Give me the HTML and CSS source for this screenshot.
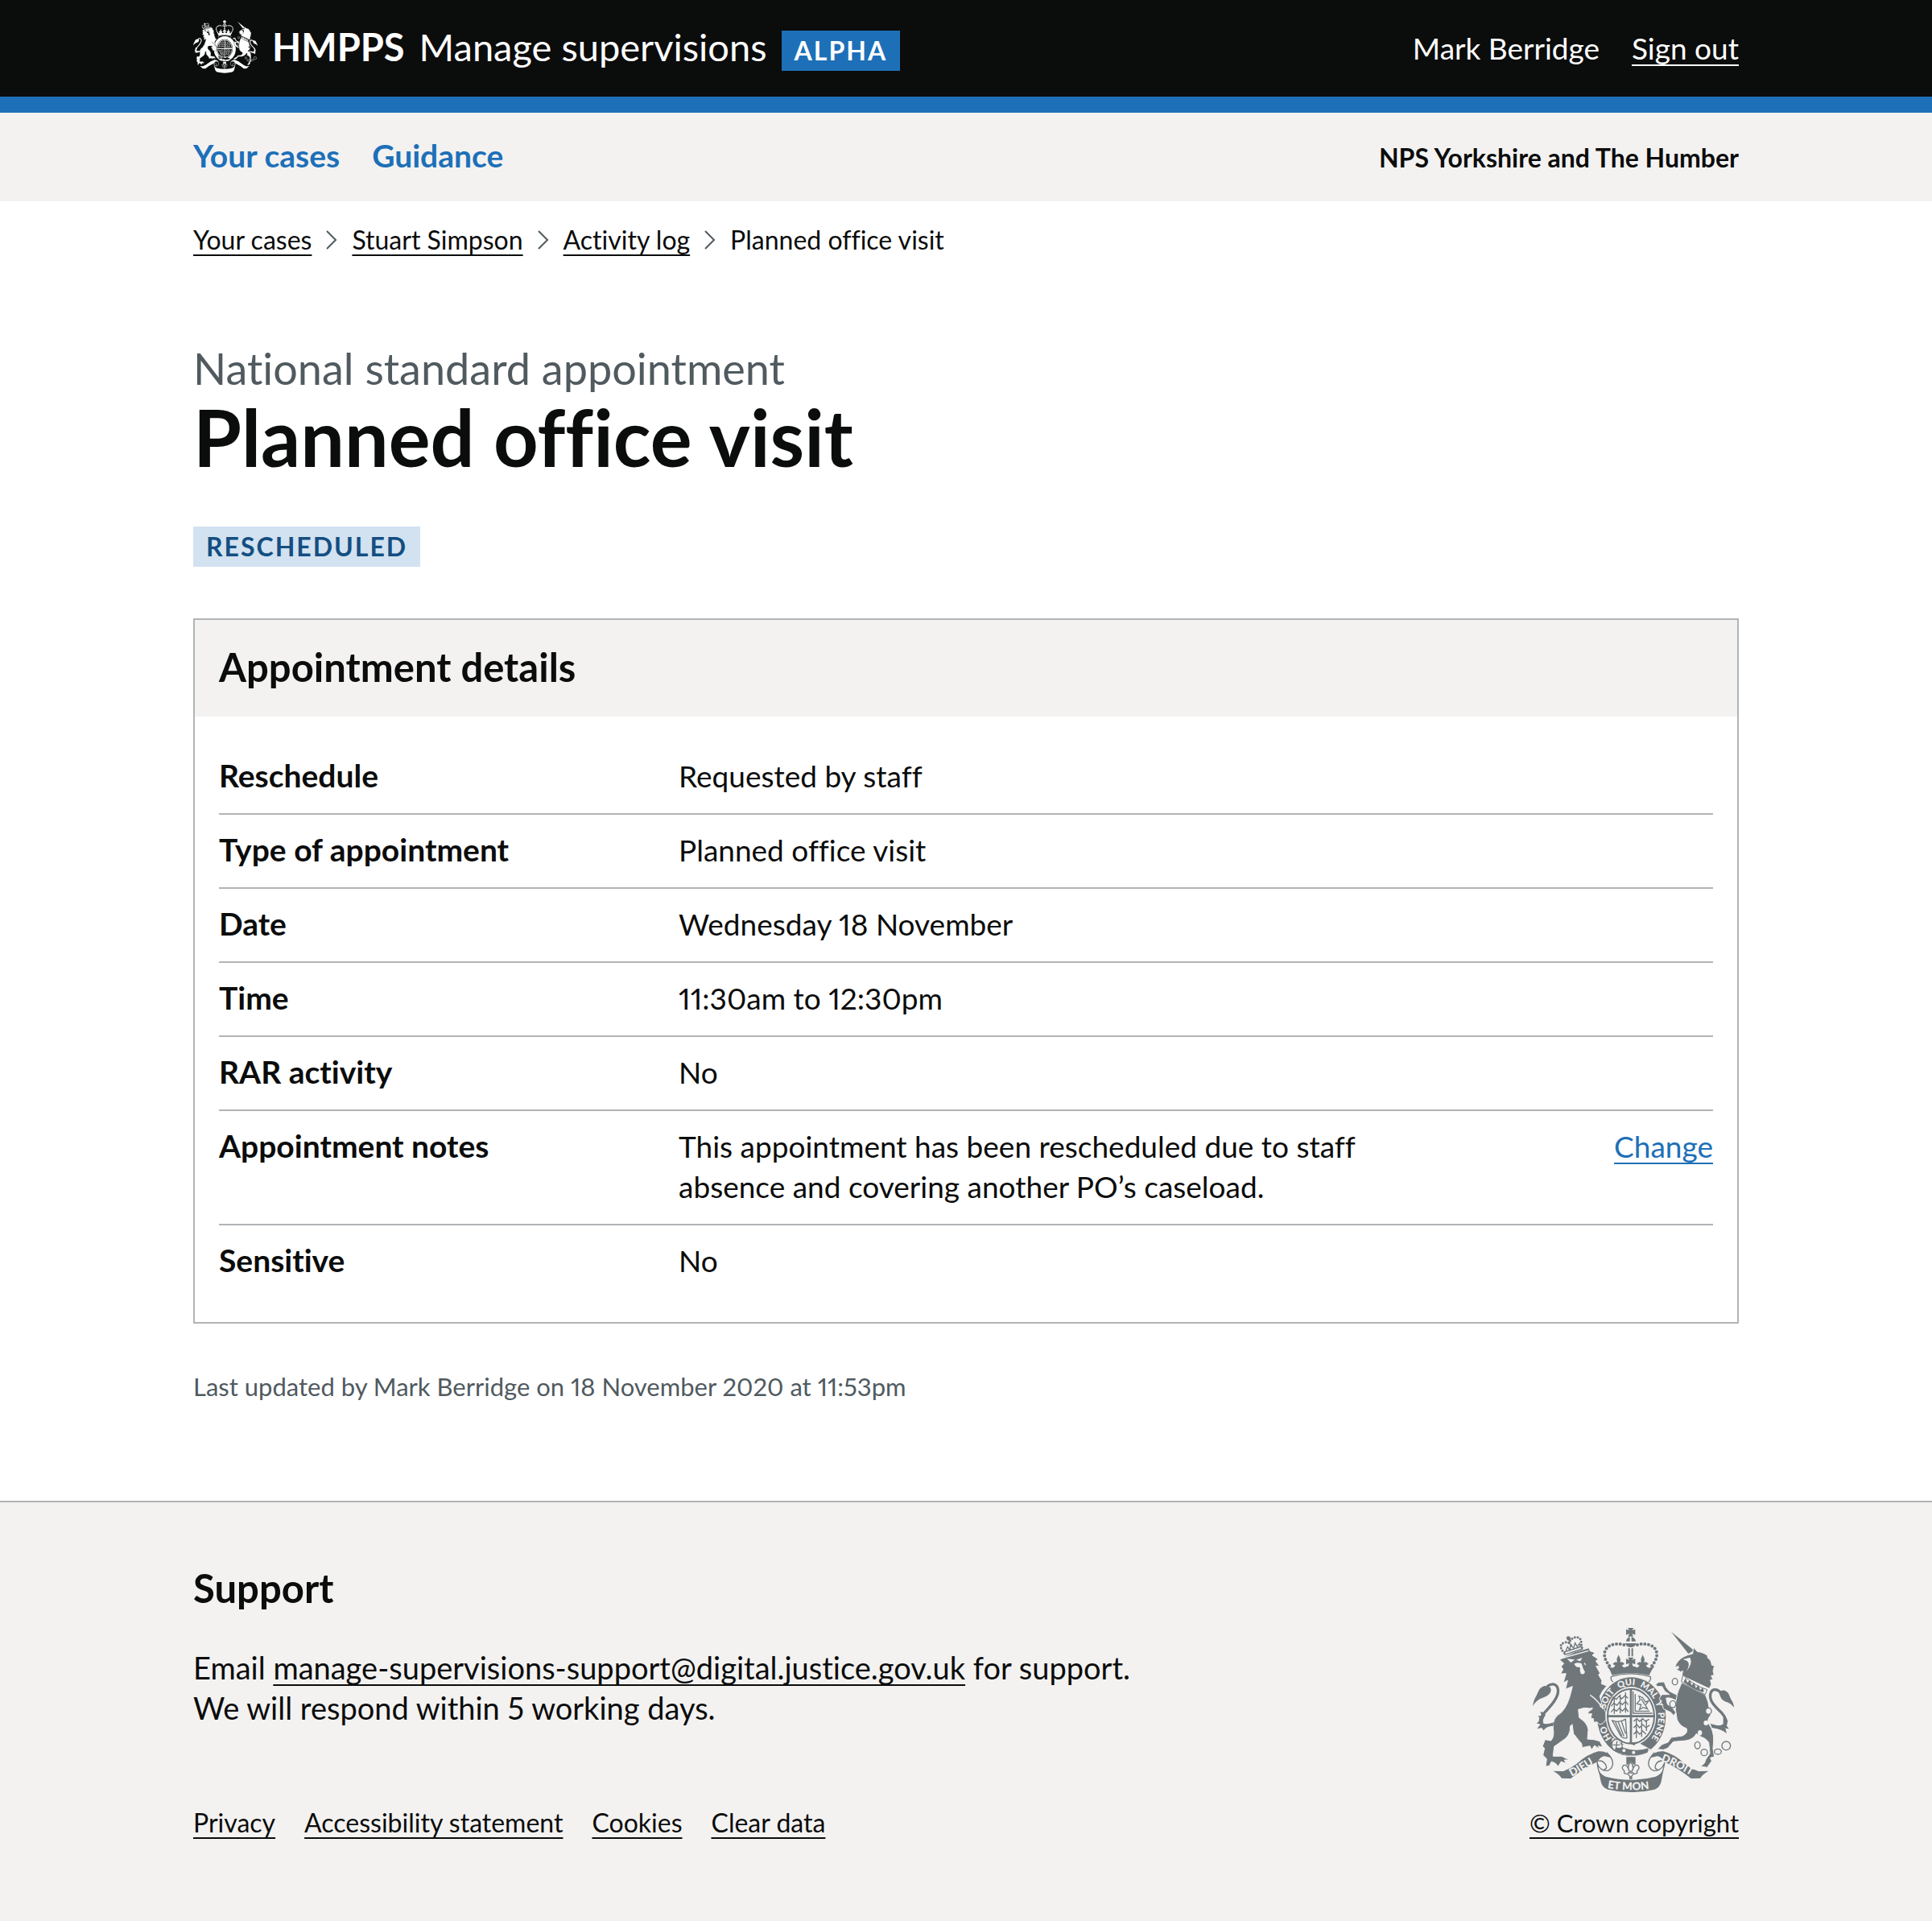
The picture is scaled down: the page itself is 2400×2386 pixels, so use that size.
FILE: index.html
```html
<!DOCTYPE html>
<html lang="en">
<head>
<meta charset="utf-8">
<meta name="viewport" content="width=device-width, initial-scale=1">
<title>Planned office visit - Manage supervisions</title>
<link rel="stylesheet" href="styles.css">
</head>
<body>
<svg class="sprite" aria-hidden="true">
  <symbol id="crest" viewBox="42 36 750 612">
    <!-- crown -->
    <path d="M402 45L396 36H418L412 45L424 41V62L412 57L417 68H397L402 57L390 62V41ZM390 86Q392 72 404 70V86ZM410 70Q424 72 426 86H410ZM387 93H428Q424 108 407 108Q391 108 387 93ZM398 112H404V142H398ZM410 112H416V142H410Z"/>
    <g class="bead-line"><path d="M382 99C350 90 318 100 311 124C304 150 322 168 334 186"/><path d="M432 99C464 90 496 100 503 124C510 150 492 168 480 186"/></g>
    <path d="M318 177Q330 186 343 184L350 176L340 170Q350 158 357 165L355 152L362 136L369 152L368 165Q376 158 384 170L374 176L382 184L399 178L402 167L390 172V150L402 156L397 146H418L412 156L424 150V172L412 167L415 178L432 184L440 176L430 170Q438 158 446 165L445 152L452 136L459 152L457 165Q464 158 474 170L464 176L471 184Q484 186 497 177Q484 192 476 212Q407 196 338 212Q332 192 318 177Z"/>
    <path class="line" d="M335 217Q407 196 480 217Q485 228 474 238M335 217Q330 228 341 238"/>
    <!-- garter and shield -->
    <ellipse cx="410" cy="367" rx="128" ry="147"/>
    <ellipse class="cut" cx="408" cy="365" rx="94" ry="110"/>
    <ellipse cx="408" cy="365" rx="90" ry="105"/>
    <ellipse class="cut" cx="408" cy="365" rx="84" ry="99"/>
    <path d="M320 361H496V369H320ZM404 262H412V468H404Z"/>
    <path class="line" d="M416 272V354H488M424 282V346H478M335 308L342 294L354 302L364 290L374 300L386 288L397 298M334 328L344 316L356 324L366 312L376 322L388 310L398 322M334 350L344 338L354 346L366 334L376 346L388 334L398 348M346 296V356M368 284V354M388 276V352"/>
    <path class="line" d="M430 318L442 304L438 290L452 296L462 312L474 308L462 324L470 338L454 332L440 340L446 322ZM446 300L460 322"/>
    <path class="line" d="M337 380Q360 392 388 376L393 446Q375 450 366 432Q350 400 337 380M350 386L374 438M361 387L382 440M373 384L388 430"/>
    <path class="line" d="M418 384L430 374L440 384L452 374L462 384L476 376M418 408L430 396L440 408L452 396L464 408L478 398M418 432L430 420L440 432L452 420L464 432M428 374V446M448 374V442M466 378V420"/>
    <path class="cut" d="M338 446Q352 448 372 470Q400 474 440 466L482 488Q450 514 410 514Q360 510 335 478Z"/>
    <path d="M374 480Q425 500 474 484L470 500Q410 526 346 494L352 480Q362 486 374 480ZM396 462H432L420 474Z"/>
    <circle class="cut" cx="382" cy="493" r="6"/><circle class="cut" cx="418" cy="500" r="6"/>
    <path class="line" d="M342 456Q332 470 340 486Q345 498 360 490M342 456Q354 444 372 456L376 482M356 458L352 488M340 472H368"/>
    <!-- lion -->
    <path class="halo" d="M142 155L165 140L200 125L252 110L256 122L274 128L264 138L286 152L277 159L291 178L278 178L293 205L287 210L300 232L298 244L318 252L303 270L292 290L303 330L314 350L315 378L303 392L292 396L281 386L270 388L268 374L258 372L262 356L246 356Q250 344 262 340Q270 330 256 336Q236 330 212 340L215 370Q246 390 249 415L246 450L270 452L292 458L303 480L286 476L291 487L272 474L262 490L255 476L225 482Q228 466 216 458L194 430L189 395L182 402Q184 440 150 458L122 478L118 514L150 514L179 528L160 528L166 541L148 534L137 552L126 540L112 534L104 550L90 552L94 524L80 510L86 484L78 478L88 452L110 456Q124 440 118 410Q114 370 148 352Q174 325 186 270L190 254L164 264L172 232L156 240L166 206L146 207L155 190L148 180L158 168Z"/>
    <path class="cut" d="M170 151L199 154L184 165ZM204 155L226 147L220 160ZM196 170Q210 162 224 169L231 190L237 200Q232 213 221 206Q216 196 219 184L204 181ZM236 164L241 176L233 170Z"/>
    <path class="cut-line" d="M256 286Q285 305 304 338M146 150L250 121"/>
    <path class="tail" d="M112 396C66 408 60 384 82 356C110 326 142 292 136 264C132 244 114 240 96 254"/>
    <path d="M42 328C46 300 55 292 63 272C72 252 92 246 108 258C114 272 106 284 90 292C70 300 56 304 42 328ZM84 352L70 348L76 364L62 364L72 378L56 392L72 394L58 412L76 408L82 418Q96 400 118 402L120 388Q96 398 82 392Q76 380 90 360Z"/>
    <path class="line" d="M160 136L228 114M158 126L224 105M166 120L172 106L180 118L184 98L194 112L200 92L208 106L216 94L219 104"/>
    <g class="small-bead"><path d="M160 130C140 108 145 94 158 92Q170 86 178 92C184 70 208 66 218 76C226 86 221 100 226 110"/><path d="M178 92Q186 100 188 110"/></g>
    <path d="M173 66L182 70L184 80L177 84L170 80L167 72Z"/>
    <!-- unicorn -->
    <path d="M558 50L643 120L622 132Z"/>
    <path class="halo" d="M572 180Q577 168 584 160Q600 140 638 132L641 108L655 124Q682 128 694 140L693 146Q708 156 709 174L719 178L714 196L718 212L707 214L714 228L704 230L708 246L700 262L598 214L601 196Q592 204 588 196L576 192L588 184ZM597 240L686 286Q698 310 701 345L705 362Q688 378 700 396Q717 420 716 456L714 486L719 516L704 520L709 532L692 556L668 552L682 540L688 524L702 504L698 462Q686 446 666 440L652 430Q640 452 612 456L566 460L545 484L530 490L506 488L524 470L546 462L558 444L600 438Q622 428 615 410Q592 404 580 378L574 340L576 296Q584 270 597 240Z"/>
    <path class="halo" d="M500 246L512 238L532 237L540 258L552 272L580 286L576 306Q548 292 539 298L544 320Q566 334 575 350L568 363L556 350L530 338L514 298L524 284L552 284L534 272L524 254L506 254Z"/>
    <path class="cut" d="M602 153L628 146Q640 168 614 198Q632 168 616 158ZM574 180L588 176L584 182Z"/>
    <path class="band" d="M602 211Q640 250 692 266L685 284Q630 264 596 236Z"/>
    <path d="M604 238L612 222L618 240L628 230L634 250L644 240L650 260L660 248L666 268L676 258L680 272L676 276Q634 264 604 238Z"/>
    <g class="ring"><ellipse cx="572" cy="236" rx="10" ry="12"/><ellipse cx="564" cy="320" rx="11" ry="13"/><ellipse cx="697" cy="346" rx="11" ry="12"/><ellipse cx="656" cy="473" rx="10" ry="13"/><circle cx="681" cy="500" r="12"/><ellipse cx="732" cy="497" rx="13" ry="10"/><circle cx="763" cy="475" r="16"/></g>
    <circle class="cut" cx="553" cy="262" r="8"/><circle class="cut" cx="688" cy="390" r="9"/><ellipse class="cut" cx="665" cy="427" rx="8" ry="10"/>
    <path class="tail" d="M712 400C768 420 776 386 744 350C716 324 696 302 706 276C712 262 730 262 744 278"/>
    <path d="M736 278C746 262 768 268 775 288C780 304 792 314 792 332C778 314 768 314 756 308C742 300 742 290 736 278ZM752 360L762 366L758 376L770 382L760 394L773 412L760 410L765 430Q746 412 710 408L704 392Q736 406 752 394Z"/>
    <!-- ribbon -->
    <path d="M118 569L156 570Q182 560 206 542Q246 506 286 496Q320 492 336 520L310 514Q296 514 284 534Q230 560 184 597L150 596Q140 580 118 569ZM697 569L659 570Q633 560 609 542Q569 506 530 496Q496 492 480 520L506 514Q520 514 532 534Q586 560 632 597L666 596Q676 580 697 569Z"/>
    <path class="line" d="M318 500Q348 530 338 552Q328 574 304 566Q284 556 282 534M304 566Q326 560 310 540Q300 528 286 532M282 534Q284 572 300 592M496 500Q466 530 476 552Q486 574 510 566Q530 556 534 534M510 566Q490 560 504 540Q514 528 530 532M534 534Q530 572 514 592"/>
    <path d="M286 560Q292 580 314 590Q407 614 500 590Q522 580 530 560L521 608Q516 630 496 638Q407 658 322 638Q300 630 296 608Z"/>
    <path d="M391 517H425V545H418L407 531L397 545H391Z"/>
    <path class="line" d="M407 534Q392 554 402 570H412Q422 554 407 534ZM402 570Q394 542 380 548Q370 558 384 570Q378 580 396 580L407 592L418 580Q436 580 430 570Q444 558 434 548Q420 542 412 570M396 576H419M404 592H411V598H404Z"/>
  </symbol>
</svg>

<header class="header">
  <div class="container header-inner">
    <div class="brand">
      <svg class="brand-crest" aria-hidden="true"><use href="#crest"/></svg>
      <a class="brand-org" href="#">HMPPS</a>
      <a class="brand-service" href="#">Manage supervisions</a>
      <strong class="tag tag-alpha">Alpha</strong>
    </div>
    <div class="account">
      <span>Mark Berridge</span>
      <a href="#">Sign out</a>
    </div>
  </div>
</header>

<div class="primary-nav">
  <div class="container primary-nav-inner">
    <nav class="nav-links" aria-label="Primary">
      <a href="#">Your cases</a>
      <a href="#">Guidance</a>
    </nav>
    <p class="region">NPS Yorkshire and The Humber</p>
  </div>
</div>

<div class="container">
  <nav aria-label="Breadcrumb">
    <ol class="breadcrumbs">
      <li><a href="#">Your cases</a></li>
      <li><svg class="chevron" viewBox="0 0 14 24" aria-hidden="true"><path d="M1 1L12 12L1 23"/></svg><a href="#">Stuart Simpson</a></li>
      <li><svg class="chevron" viewBox="0 0 14 24" aria-hidden="true"><path d="M1 1L12 12L1 23"/></svg><a href="#">Activity log</a></li>
      <li><svg class="chevron" viewBox="0 0 14 24" aria-hidden="true"><path d="M1 1L12 12L1 23"/></svg><span aria-current="page">Planned office visit</span></li>
    </ol>
  </nav>

  <main>
    <p class="caption">National standard appointment</p>
    <h1 class="title">Planned office visit</h1>
    <strong class="tag tag-status">Rescheduled</strong>

    <section class="card">
      <h2 class="card-title">Appointment details</h2>
      <dl class="summary">
        <div class="row"><dt>Reschedule</dt><dd>Requested by staff</dd></div>
        <div class="row"><dt>Type of appointment</dt><dd>Planned office visit</dd></div>
        <div class="row"><dt>Date</dt><dd>Wednesday 18 November</dd></div>
        <div class="row"><dt>Time</dt><dd>11:30am to 12:30pm</dd></div>
        <div class="row"><dt>RAR activity</dt><dd>No</dd></div>
        <div class="row"><dt>Appointment notes</dt><dd>This appointment has been rescheduled due to staff absence and covering another PO’s caseload.</dd><dd class="action"><a href="#">Change</a></dd></div>
        <div class="row"><dt>Sensitive</dt><dd>No</dd></div>
      </dl>
    </section>

    <p class="updated">Last updated by Mark Berridge on 18 November 2020 at 11:53pm</p>
  </main>
</div>

<footer class="footer">
  <div class="container footer-inner">
    <div>
      <h2 class="footer-title">Support</h2>
      <p class="footer-text">Email <a href="#">manage-supervisions-support@digital.justice.gov.uk</a> for support.<br>We will respond within 5 working days.</p>
      <ul class="footer-links">
        <li><a href="#">Privacy</a></li>
        <li><a href="#">Accessibility statement</a></li>
        <li><a href="#">Cookies</a></li>
        <li><a href="#">Clear data</a></li>
      </ul>
    </div>
    <div class="copyright">
      <svg class="footer-crest" viewBox="42 36 750 612" aria-hidden="true">
        <use href="#crest" x="42" y="36" width="750" height="612"/>
        <path id="garter-line" class="guide" d="M339 450A100 118 0 1 1 467 464"/>
        <path id="dieu-line" class="guide" d="M188 590Q235 564 296 524"/>
        <path id="droit-line" class="guide" d="M520 531Q575 550 656 602"/>
        <path id="mon-line" class="guide" d="M320 632Q407 648 500 632"/>
        <text class="garter-text"><textPath href="#garter-line" startOffset="4">HO</textPath></text>
        <text class="garter-text"><textPath href="#garter-line" startOffset="118">SOIT</textPath></text>
        <text class="garter-text"><textPath href="#garter-line" startOffset="212">QUI</textPath></text>
        <text class="garter-text"><textPath href="#garter-line" startOffset="292">MAL</textPath></text>
        <text class="garter-text"><textPath href="#garter-line" startOffset="376">Y</textPath></text>
        <text class="garter-text"><textPath href="#garter-line" startOffset="416">PENSE</textPath></text>
        <text class="ribbon-text"><textPath href="#dieu-line">DIEU</textPath></text>
        <text class="ribbon-text"><textPath href="#droit-line">DROIT</textPath></text>
        <text class="ribbon-text"><textPath href="#mon-line">ET MON</textPath></text>
      </svg>
      <a href="#">© Crown copyright</a>
    </div>
  </div>
</footer>
</body>
</html>
```
FILE: styles.css
```css
* {
  box-sizing: border-box;
}

body {
  margin: 0;
  min-height: 100vh;
  display: flex;
  flex-direction: column;
  font-family: Lato, "Liberation Sans", sans-serif;
  font-size: 37px;
  line-height: 50px;
  font-variant-ligatures: none;
  font-variant-numeric: proportional-nums;
  color: #0b0c0c;
  background: #fff;
}

h1, h2, p, ol, ul, dl, dd {
  margin: 0;
  padding: 0;
}

ol, ul {
  list-style: none;
}

a {
  color: inherit;
  text-decoration-thickness: 2px;
  text-underline-offset: 6px;
  text-decoration-skip-ink: none;
}

.container {
  width: 100%;
  max-width: 2000px;
  margin: 0 auto;
  padding: 0 40px;
}

/* Crest artwork */
.sprite {
  position: absolute;
  width: 0;
  height: 0;
}

.line, .band, .ring, .tail, .bead-line, .small-bead {
  fill: none;
  stroke: currentColor;
  stroke-width: 4;
}

.cut {
  fill: var(--crest-ground);
}

.cut-line {
  fill: none;
  stroke: var(--crest-ground);
  stroke-width: 4;
}

.halo {
  stroke: var(--crest-ground);
  stroke-width: 3;
}

.band {
  fill: var(--crest-ground);
  stroke-width: 3;
}

.ring {
  fill: var(--crest-ground);
}

.tail {
  stroke-width: 10;
}

.bead-line {
  stroke-width: 12;
  stroke-linecap: round;
  stroke-dasharray: 0 14;
}

.small-bead {
  stroke-width: 9;
  stroke-linecap: round;
  stroke-dasharray: 0 11;
}

.guide {
  fill: none;
}

.garter-text, .ribbon-text {
  fill: var(--crest-ground);
  font-weight: 900;
}

.garter-text {
  font-size: 33px;
}

.ribbon-text {
  font-size: 40px;
}

/* Header */
.header {
  color: #fff;
  background: #0b0c0c;
  border-bottom: 20px solid #1d70b8;
}

.header-inner {
  display: flex;
  justify-content: space-between;
  align-items: center;
  min-height: 120px;
}

.brand {
  display: flex;
  align-items: center;
  gap: 18px;
  padding-bottom: 4px;
  font-size: 47px;
  line-height: 60px;
}

.brand a {
  text-decoration: none;
}

.brand-crest {
  --crest-ground: #0b0c0c;
  width: 80px;
  height: 68px;
  fill: currentColor;
}

.brand-org {
  font-weight: 700;
}

.account {
  display: flex;
  gap: 40px;
}

.tag {
  display: block;
  width: fit-content;
  padding: 0 16px;
  font-size: 32px;
  line-height: 50px;
  font-weight: 700;
  letter-spacing: 2px;
  text-transform: uppercase;
}

.tag-alpha {
  margin-top: 10px;
  color: #fff;
  background: #1d70b8;
}

.tag-status {
  color: #144e81;
  background: #d2e2f1;
}

/* Primary navigation */
.primary-nav {
  background: #f3f2f1;
}

.primary-nav-inner {
  display: flex;
  justify-content: space-between;
  align-items: baseline;
  padding-top: 28px;
  padding-bottom: 32px;
  font-weight: 700;
}

.nav-links {
  display: flex;
  gap: 40px;
  font-size: 39px;
  color: #1d70b8;
}

.nav-links a {
  text-decoration: none;
}

.region {
  font-size: 32px;
  line-height: 40px;
}

/* Breadcrumbs */
.breadcrumbs {
  display: flex;
  flex-wrap: wrap;
  padding-top: 28px;
  font-size: 32px;
  line-height: 40px;
}

.breadcrumbs li {
  display: flex;
  align-items: center;
}

.chevron {
  width: 14px;
  height: 24px;
  margin: 0 18px;
  fill: none;
  stroke: #505a5f;
  stroke-width: 2;
}

/* Page heading */
.caption {
  margin-top: 110px;
  font-size: 54px;
  line-height: 60px;
  color: #505a5f;
}

.title {
  margin-bottom: 56px;
  font-size: 97px;
  line-height: 110px;
}

/* Details card */
.card {
  margin-top: 64px;
  border: 2px solid #b1b4b6;
}

.card-title {
  padding: 28px 30px 32px;
  font-size: 49px;
  line-height: 60px;
  background: #f3f2f1;
}

.summary {
  padding: 30px;
}

.row {
  display: grid;
  grid-template-columns: 4fr 7fr 2fr;
  padding: 19px 0 21px;
  border-bottom: 2px solid #b1b4b6;
}

.row:last-child {
  border-bottom: 0;
}

.row dt {
  font-size: 39px;
  line-height: 48px;
  font-weight: 700;
}

.row dd {
  padding-right: 40px;
}

.row .action {
  padding-right: 0;
  text-align: right;
  color: #1d70b8;
}

.updated {
  padding: 58px 0 122px;
  font-size: 31px;
  line-height: 40px;
  color: #505a5f;
}

/* Footer */
.footer {
  flex: 1;
  padding: 76px 0;
  background: #f3f2f1;
  border-top: 2px solid #b1b4b6;
}

.footer-inner {
  display: flex;
  justify-content: space-between;
  align-items: flex-end;
}

.footer-title {
  margin-bottom: 44px;
  font-size: 49px;
  line-height: 60px;
}

.footer-text {
  font-size: 38px;
}

.footer-links {
  display: flex;
  flex-wrap: wrap;
  gap: 36px;
  margin-top: 98px;
  font-size: 32px;
  line-height: 40px;
}

.copyright {
  display: flex;
  flex-direction: column;
  align-items: flex-end;
  gap: 18px;
  font-size: 31px;
  line-height: 40px;
}

.footer-crest {
  --crest-ground: #f3f2f1;
  width: 250px;
  height: 204px;
  margin-right: 6px;
  overflow: visible;
  color: #6f777b;
  fill: currentColor;
}
```
